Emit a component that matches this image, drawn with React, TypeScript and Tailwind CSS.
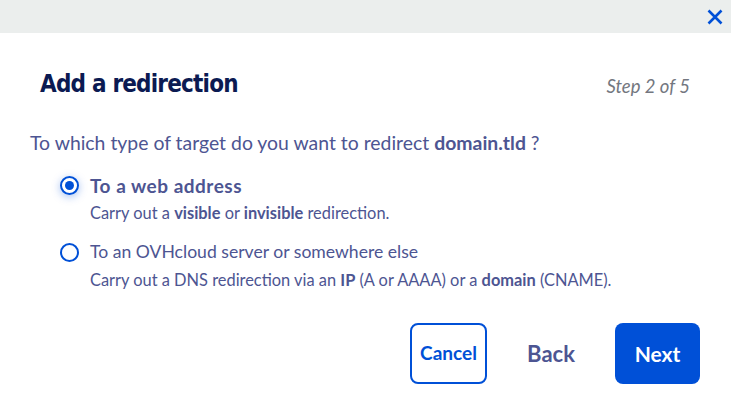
import React from "react";

function Radio({ checked }: { checked: boolean }) {
  return (
    <span
      className={
        "flex h-[19px] w-[19px] shrink-0 items-center justify-center rounded-full border-2 border-[#0050d7] bg-white " +
        (checked ? "shadow-[0_2px_8px_rgba(0,80,215,0.35)]" : "")
      }
    >
      {checked && <span className="h-[9px] w-[9px] rounded-full bg-[#0050d7]" />}
    </span>
  );
}

export default function App() {
  const body = { fontFamily: "Lato, 'Noto Sans', sans-serif" };
  return (
    <div className="h-[396px] w-[731px] overflow-hidden bg-white" style={body}>
      <div className="flex h-[33px] items-center justify-end bg-[#ebeeed] pr-[8px]">
        <svg width="16" height="16" viewBox="0 0 16 16" className="text-[#0050d7]">
          <path d="M1.5 1.5 L14.5 14.5 M14.5 1.5 L1.5 14.5" stroke="currentColor" strokeWidth="2.6" strokeLinecap="butt" />
        </svg>
      </div>

      <div className="flex items-center justify-between pl-[40px] pr-[41px] pt-[35px]">
        <h2
          className="text-[24px] font-bold leading-[32px] tracking-[-0.8px] text-[#0b1a52]"
          style={{ fontFamily: "'DejaVu Sans Condensed', Lato, sans-serif" }}
        >
          Add a redirection
        </h2>
        <span className="pt-[4px] text-[18.5px] italic leading-[24px] text-[#737780]">Step 2 of 5</span>
      </div>

      <p className="mt-[31px] pl-[30px] text-[19.4px] leading-[24px] text-[#4d5592]">
        To which type of target do you want to redirect <b className="font-bold">domain.tld</b> ?
      </p>

      <div className="mt-[19px] flex flex-col pl-[60px] text-[#4d5592]">
        <div className="flex gap-[11px]">
          <div className="pt-[1.5px]">
            <Radio checked />
          </div>
          <div className="flex flex-col">
            <span className="text-[19px] font-bold leading-[24px] tracking-[0.5px]">To a web address</span>
            <span className="mt-[5px] text-[16.4px] leading-[20px]">
              Carry out a <b>visible</b> or <b>invisible</b> redirection.
            </span>
          </div>
        </div>
        <div className="mt-[17px] flex gap-[11px]">
          <div className="pt-[2.5px]">
            <Radio checked={false} />
          </div>
          <div className="flex flex-col">
            <span className="text-[17.6px] leading-[24px]">To an OVHcloud server or somewhere else</span>
            <span className="mt-[6px] text-[16.4px] leading-[20px]">
              Carry out a DNS redirection via an <b>IP</b> (A or AAAA) or a <b>domain</b> (CNAME).
            </span>
          </div>
        </div>
      </div>

      <div className="mt-[33px] flex justify-end gap-[20px] pr-[31px]">
        <button className="flex h-[61px] w-[77px] items-center justify-center rounded-[8px] border-2 border-[#0050d7] bg-white text-[19px] font-bold text-[#0050d7]">
          Cancel
        </button>
        <button className="flex h-[61px] w-[88px] items-center justify-center rounded-[8px] bg-white text-[22px] font-bold text-[#4d5592]">
          Back
        </button>
        <button className="flex h-[61px] w-[85px] items-center justify-center rounded-[8px] bg-[#0050d7] text-[21px] font-bold text-white">
          Next
        </button>
      </div>
    </div>
  );
}
